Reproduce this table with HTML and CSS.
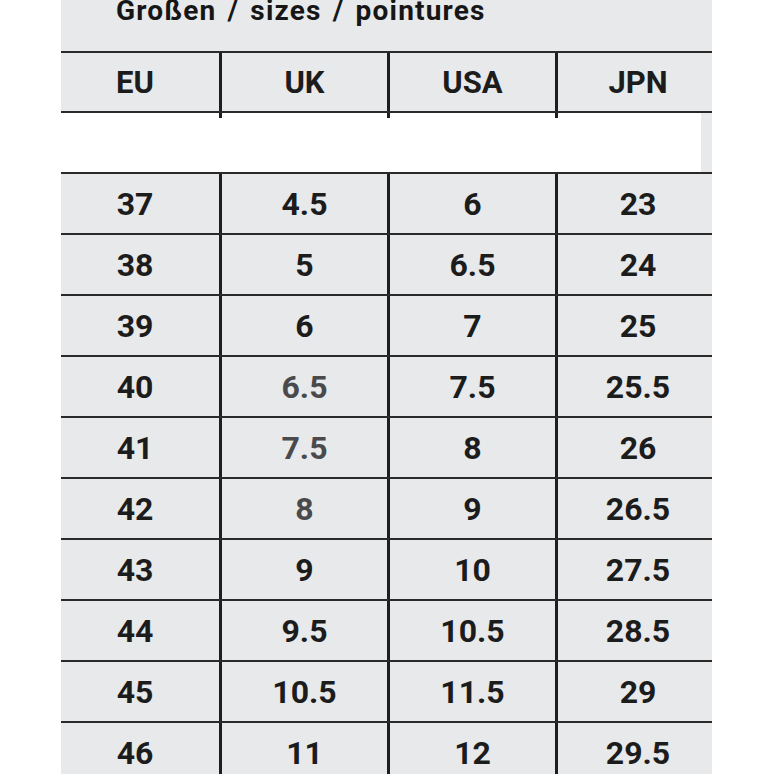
FILE: index.html
```html
<!DOCTYPE html>
<html>
<head>
<meta charset="utf-8">
<link rel="stylesheet" href="styles.css">
</head>
<body>
<div class="sheet">
  <div class="title">Großen / sizes / pointures</div>
  <div class="row head">
    <div class="c c1">EU</div><div class="c c2">UK</div><div class="c c3">USA</div><div class="c c4">JPN</div>
  </div>
  <div class="stubs top"><div class="s"></div><div class="s"></div><div class="s"></div><div class="s"></div></div>
  <div class="gap"></div>
  <div class="rows">
    <div class="row"><div class="c c1">37</div><div class="c c2">4.5</div><div class="c c3">6</div><div class="c c4">23</div></div>
    <div class="row"><div class="c c1">38</div><div class="c c2">5</div><div class="c c3">6.5</div><div class="c c4">24</div></div>
    <div class="row"><div class="c c1">39</div><div class="c c2">6</div><div class="c c3">7</div><div class="c c4">25</div></div>
    <div class="row"><div class="c c1">40</div><div class="c c2 faded">6.5</div><div class="c c3">7.5</div><div class="c c4">25.5</div></div>
    <div class="row"><div class="c c1">41</div><div class="c c2 faded">7.5</div><div class="c c3">8</div><div class="c c4">26</div></div>
    <div class="row"><div class="c c1">42</div><div class="c c2 faded">8</div><div class="c c3">9</div><div class="c c4">26.5</div></div>
    <div class="row"><div class="c c1">43</div><div class="c c2">9</div><div class="c c3">10</div><div class="c c4">27.5</div></div>
    <div class="row"><div class="c c1">44</div><div class="c c2">9.5</div><div class="c c3">10.5</div><div class="c c4">28.5</div></div>
    <div class="row"><div class="c c1">45</div><div class="c c2">10.5</div><div class="c c3">11.5</div><div class="c c4">29</div></div>
    <div class="row"><div class="c c1">46</div><div class="c c2">11</div><div class="c c3">12</div><div class="c c4">29.5</div></div>
  </div>
</div>
</body>
</html>
```
FILE: styles.css
```css
html, body {
  margin: 0;
  padding: 0;
  background: #ffffff;
  height: 774px;
  overflow: hidden;
}
.sheet {
  margin-left: 61px;
  width: 651px;
  background: #e8e9eb;
  font-family: Roboto, "Liberation Sans", sans-serif;
  color: #1c1c1c;
}
.title {
  box-sizing: border-box;
  padding-left: 55px;
  font-size: 28px;
  font-weight: 700;
  line-height: 22px;
  height: 51px;
  letter-spacing: 1.2px;
  word-spacing: 3px;
  color: #161616;
  white-space: nowrap;
}
.row {
  display: grid;
  grid-template-columns: 158px 168px 168px 157px;
  height: 61px;
  box-sizing: border-box;
  border-bottom: 2px solid #2a2a2a;
}
.head {
  border-top: 2px solid #2a2a2a;
  height: 62px;
}
.c {
  display: flex;
  align-items: center;
  justify-content: center;
  box-sizing: border-box;
  font-size: 32px;
  font-weight: 700;
}
.head .c {
  font-size: 31px;
  font-weight: 700;
}
.c2, .c3, .c4 {
  border-left: 3px solid #1e1e1e;
}
.c1 { padding-right: 10px; }
.c4 { padding-left: 6px; }
.faded { color: #4a4a4c; }
.stubs {
  display: grid;
  grid-template-columns: 158px 168px 168px 157px;
  height: 5px;
  background: #ffffff;
  margin-right: 11px;
}
.stubs .s { box-sizing: border-box; }
.stubs .s + .s { border-left: 3px solid #1e1e1e; }
.gap {
  height: 54px;
  background: #ffffff;
  margin-right: 11px;
}
.rows {
  border-top: 2px solid #2a2a2a;
}
```
